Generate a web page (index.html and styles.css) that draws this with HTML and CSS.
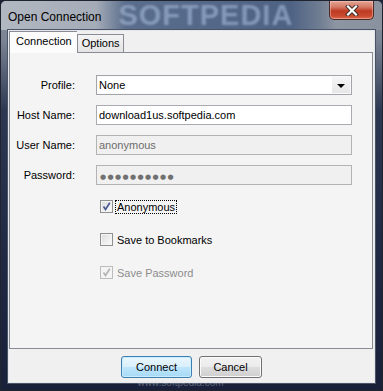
FILE: index.html
```html
<!DOCTYPE html>
<html lang="en">
<head>
    <meta charset="UTF-8">
    <title>Open Connection</title>
    <link rel="stylesheet" href="styles.css">
</head>
<body>
    <div class="window">
        <div class="titlebar">
            <span class="title">Open Connection</span>
            <span class="watermark">SOFTPEDIA</span>
            <div class="close">
                <svg width="14" height="11" viewBox="0 0 14 11">
                    <path d="M3 1.5 L11 9.5 M11 1.5 L3 9.5" stroke="#3a2a28" stroke-width="4" stroke-linecap="square"/>
                    <path d="M3 1.5 L11 9.5 M11 1.5 L3 9.5" stroke="#ffffff" stroke-width="2.2" stroke-linecap="square"/>
                </svg>
            </div>
        </div>

        <div class="client">
            <div class="tabs">
                <div class="tab active">Connection</div>
                <div class="tab">Options</div>
            </div>

            <div class="panel">
                <div class="form">
                    <label>Profile:</label>
                    <div class="field select">
                        <span class="value">None</span>
                        <span class="arrow"></span>
                    </div>

                    <label>Host Name:</label>
                    <div class="field">download1us.softpedia.com</div>

                    <label>User Name:</label>
                    <div class="field disabled">anonymous</div>

                    <label>Password:</label>
                    <div class="field disabled"><span class="dots">●●●●●●●●●●</span></div>
                </div>

                <div class="checks">
                    <div class="check">
                        <span class="box">
                            <svg width="11" height="11" viewBox="0 0 11 11"><path d="M2.5 5.5 L4.5 8.5 L8.8 1.8" fill="none" stroke="#4a5a94" stroke-width="1.7"/></svg>
                        </span>
                        <span class="text focus">Anonymous</span>
                    </div>
                    <div class="check">
                        <span class="box"></span>
                        <span class="text">Save to Bookmarks</span>
                    </div>
                    <div class="check off">
                        <span class="box">
                            <svg width="11" height="11" viewBox="0 0 11 11"><path d="M2.5 5.5 L4.5 8.5 L8.8 1.8" fill="none" stroke="#b4b4b4" stroke-width="1.7"/></svg>
                        </span>
                        <span class="text">Save Password</span>
                    </div>
                </div>
            </div>

            <div class="buttons">
                <button class="btn default">Connect</button>
                <button class="btn">Cancel</button>
            </div>
        </div>
        <div class="footer">www.softpedia.com</div>
    </div>
</body>
</html>
```

FILE: styles.css
```css
body {
    margin: 0;
    font-family: "Liberation Sans", Arial, sans-serif;
    font-size: 11px;
    color: #000;
    background: #1a2238;
}
.window {
    width: 383px;
    height: 391px;
    box-sizing: border-box;
    border: 1px solid #20242e;
    border-radius: 6px 6px 0 0;
    background: linear-gradient(to bottom, #8d95a2 0, #7a8393 40px, #2c3751 110px, #1d2540 300px, #18203a 100%);
    overflow: hidden;
}
.titlebar {
    height: 29px;
    display: flex;
    align-items: center;
    padding-left: 7px;
    background: linear-gradient(to right, #b2b8c1 0, #a4acb8 95px, #5a6d8c 125px, #4e6284 290px, #6f7d92 318px, #8d95a2 335px, #8a929f 100%);
}
.title {
    font-size: 12px;
    padding-top: 2px;
}
.watermark {
    margin-left: 17px;
    font-size: 29px;
    line-height: 29px;
    font-weight: bold;
    letter-spacing: 1px;
    color: rgba(175, 195, 225, 0.55);
    filter: blur(1px);
}
.close {
    margin-left: auto;
    margin-right: 8px;
    align-self: flex-start;
    width: 45px;
    height: 19px;
    box-sizing: border-box;
    border: 1px solid #4a2a26;
    border-top: none;
    border-radius: 0 0 5px 5px;
    background: linear-gradient(to bottom, #e3a595 0, #d47a66 6px, #bf3a22 10px, #c94a31 15px, #dc6b4f 100%);
    box-shadow: inset 0 0 0 1px rgba(255, 210, 200, 0.45);
    display: flex;
    align-items: center;
    justify-content: center;
}
.client {
    margin: 0 7px;
    height: 353px;
    box-sizing: border-box;
    border: 1px solid #e4e7ec;
    box-shadow: 0 0 0 1px #4b5366;
    background: #f0f0f0;
    padding: 0 1px 0 0;
}
.tabs {
    display: flex;
    align-items: flex-end;
    height: 21px;
}
.tab {
    height: 18px;
    box-sizing: border-box;
    padding: 2px 3px 0 4px;
    border: 1px solid #898c95;
    border-bottom: none;
    background: linear-gradient(to bottom, #f4f4f4, #e4e4e4);
}
.tab.active {
    height: 22px;
    margin-bottom: -1px;
    padding: 3px 5px 0 6px;
    background: #fcfcfc;
    border-right: none;
    position: relative;
    z-index: 1;
}
.panel {
    height: 297px;
    box-sizing: border-box;
    border: 1px solid #898c95;
    background: #f4f4f4;
    padding-top: 22px;
}
.form {
    display: grid;
    grid-template-columns: 65px 256px;
    column-gap: 21px;
    row-gap: 10px;
}
.form label {
    text-align: right;
    align-self: center;
}
.field {
    height: 20px;
    box-sizing: border-box;
    border: 1px solid #a9abb0;
    background: #fff;
    padding: 0 2px;
    line-height: 18px;
}
.field.disabled {
    background: #f0f0f0;
    border-color: #b3b3b3;
    color: #6d6d6d;
}
.dots {
    font-family: "DejaVu Sans", sans-serif;
    font-size: 7px;
    letter-spacing: 1.4px;
    padding-left: 1px;
    color: #707070;
}
.select {
    display: flex;
    padding: 0 0 0 2px;
    border-color: #a2a4a9;
    box-shadow: inset 0 0 0 1px #fafafa;
}
.select .value {
    flex: 1;
}
.select .arrow {
    width: 18px;
    margin: 1px;
    background: linear-gradient(to bottom, #f6f6f6, #e6e6e6);
    display: flex;
    align-items: center;
    justify-content: center;
}
.select .arrow::after {
    content: "";
    border-left: 4px solid transparent;
    border-right: 4px solid transparent;
    border-top: 4px solid #000;
    margin-top: 1px;
}
.checks {
    display: flex;
    flex-direction: column;
    gap: 20px;
    margin: 15px 0 0 90px;
}
.check {
    display: flex;
    align-items: center;
    height: 13px;
    gap: 4px;
}
.box {
    width: 13px;
    height: 13px;
    box-sizing: border-box;
    border: 1px solid #8e8f8f;
    background: linear-gradient(135deg, #dcdcdc, #fbfbfb);
    box-shadow: inset 0 0 0 1px #f4f4f4;
    display: flex;
    align-items: center;
    justify-content: center;
}
.text.focus {
    outline: 1px dotted #000;
    outline-offset: 0;
    padding: 0 1px;
    margin-left: -1px;
}
.check.off .box {
    border-color: #bcbcbc;
    background: #f4f4f4;
}
.check.off .text {
    color: #8d8d8d;
}
.buttons {
    display: flex;
    justify-content: center;
    gap: 7px;
    margin-top: 7px;
    padding-left: 1px;
}
.btn {
    width: 63px;
    height: 22px;
    font-family: "Liberation Sans", Arial, sans-serif;
    font-size: 11px;
    color: #000;
    border: 1px solid #707070;
    border-radius: 3px;
    background: linear-gradient(to bottom, #f2f2f2 0, #ebebeb 50%, #dddddd 51%, #cfcfcf 100%);
    box-shadow: inset 0 0 0 1px #fbfbfb;
    padding: 0;
}
.btn.default {
    width: 71px;
    border-color: #3c7fb1;
    background: linear-gradient(to bottom, #eaf6fd 0, #d9f0fc 50%, #bee6fd 51%, #a7d9f5 100%);
    box-shadow: inset 0 0 0 1px #c9ecff;
}
.footer {
    height: 8px;
    margin-top: -5px;
    text-align: center;
    font-size: 10px;
    line-height: 10px;
    color: rgba(220, 225, 235, 0.35);
    padding-right: 22px;
}
```
